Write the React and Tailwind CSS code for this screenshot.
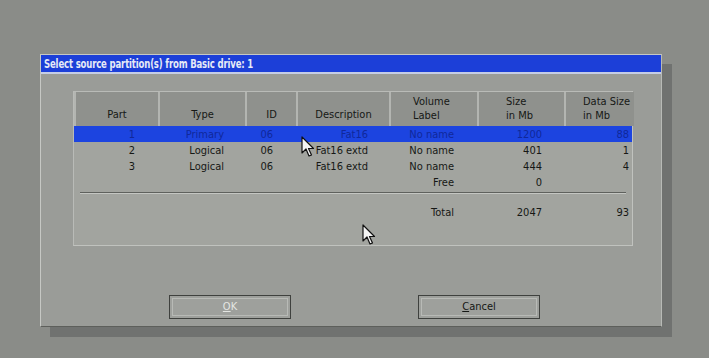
import React from "react";

const font = { fontFamily: '"DejaVu Sans Condensed","DejaVu Sans",sans-serif' };

function Arrow({ className }) {
  return (
    <svg className={className} width="14" height="22" viewBox="0 0 14 22">
      <path d="M1 1 L1 17 L5 13 L8 20 L10.5 19 L7.5 12.5 L12.5 12.5 Z" fill="#f4f4f4" stroke="#111" strokeWidth="1.2" strokeLinejoin="round" />
    </svg>
  );
}

const rows = [
  ["2", "Logical", "06", "Fat16 extd", "No name", "401", "1"],
  ["3", "Logical", "06", "Fat16 extd", "No name", "444", "4"],
  ["", "", "", "", "Free", "0", ""],
];

const cols = "grid grid-cols-[84px_87px_51px_93px_88px_87px_70px]";

function Row({ r, sel }) {
  const base = "h-[16px] flex items-center justify-end leading-none";
  return (
    <div className={`${cols} ${sel ? "bg-[#1c44e0] text-[#10289a]" : "text-[#161815]"}`}>
      <div className={`${base} pr-[23px]`}>{r[0]}</div>
      <div className={`${base} pr-[21px]`}>{r[1]}</div>
      <div className={`${base} pr-[23px]`}>{r[2]}</div>
      <div className={`${base} pr-[21px]`}>{r[3]}</div>
      <div className={`${base} pr-[23px]`}>{r[4]}</div>
      <div className={`${base} pr-[22px]`}>{r[5]}</div>
      <div className={`${base} pr-[5px]`}>{r[6]}</div>
    </div>
  );
}

export default function App() {
  const hc = "bg-[#8f918d] border-l-2 border-[#b3b5b1] h-[34px] flex flex-col justify-center leading-[14px] text-[#161815]";
  return (
    <div className="w-[709px] h-[358px] bg-[#8a8c88] relative overflow-hidden pl-[40px] pt-[54px]" style={font}>
      <div className="w-[622px] h-[273px] bg-[#9a9c98] border-l border-t border-[#c6c8c4] border-r border-b border-r-[#b8bab6] border-b-[#5d5f5b] shadow-[10px_10px_0_#707270] flex flex-col">
        <div className="h-[19px] bg-[#1c3fd8] border-b-2 border-[#c5cde6] flex items-center pl-[3px]">
          <span className="text-[12px] font-bold text-[#e6eaf6] tracking-[-0.2px] origin-left scale-x-[0.79] whitespace-nowrap leading-none">
            Select source partition(s) from Basic drive: 1
          </span>
        </div>
        <div className="ml-[32px] mt-[17px] w-[560px] h-[155px] bg-[#a2a49f] border-t border-l border-[#b9bbb7] border-r border-b border-r-[#c0c2be] border-b-[#c0c2be] text-[11px]">
          <div className={cols}>
            <div className={`${hc} items-center pt-[12px]`}>Part</div>
            <div className={`${hc} items-center pt-[12px]`}>Type</div>
            <div className={`${hc} items-center pt-[12px]`}>ID</div>
            <div className={`${hc} items-center pt-[12px]`}>Description</div>
            <div className={`${hc} pl-[22px]`}><span>Volume</span><span>Label</span></div>
            <div className={`${hc} pl-[27px]`}><span>Size</span><span>in Mb</span></div>
            <div className={`${hc} pl-[17px]`}><span>Data Size</span><span>in Mb</span></div>
          </div>
          <Row r={["1", "Primary", "06", "Fat16", "No name", "1200", "88"]} sel />
          {rows.map((r, i) => (
            <Row key={i} r={r} />
          ))}
          <div className="mx-[6px] mt-[2px] h-[2px] border-t border-[#5f615d] border-b border-b-[#c4c6c2]" />
          <div className={`${cols} mt-[11px] text-[#161815]`}>
            <div /><div /><div /><div />
            <div className="h-[16px] flex items-center justify-end pr-[23px]">Total</div>
            <div className="h-[16px] flex items-center justify-end pr-[22px]">2047</div>
            <div className="h-[16px] flex items-center justify-end pr-[5px]">93</div>
          </div>
        </div>
        <div className="mt-[49px] flex pl-[128px] gap-[127px] text-[11px]">
          <div className="w-[122px] h-[24px] border border-[#3f413e] bg-[#9ea09c] p-[2px]">
            <div className="w-full h-full border border-[#b8bab6] flex items-center justify-center text-[#e4e6e2]">
              <span><span className="underline">O</span>K</span>
            </div>
          </div>
          <div className="w-[122px] h-[24px] border border-[#3f413e] bg-[#9ea09c] p-[2px]">
            <div className="w-full h-full border border-[#b8bab6] flex items-center justify-center text-[#161815]">
              <span><span className="underline">C</span>ancel</span>
            </div>
          </div>
        </div>
      </div>
      <Arrow className="absolute left-[301px] top-[136px]" />
      <Arrow className="absolute left-[362px] top-[224px]" />
    </div>
  );
}
